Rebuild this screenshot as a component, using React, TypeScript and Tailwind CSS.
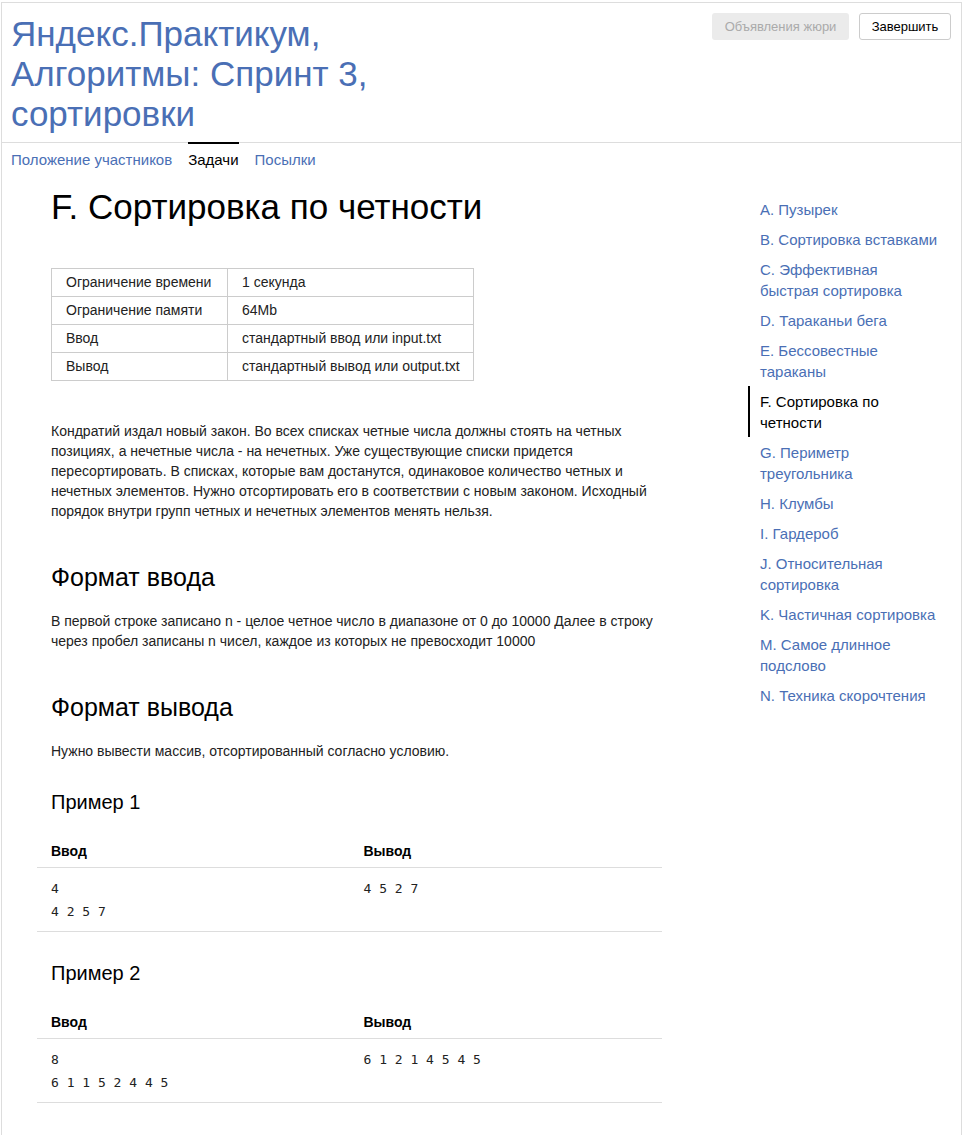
import React from "react";

const tasks = [
  "A. Пузырек",
  "B. Сортировка вставками",
  "C. Эффективная быстрая сортировка",
  "D. Тараканьи бега",
  "E. Бессовестные тараканы",
  "F. Сортировка по четности",
  "G. Периметр треугольника",
  "H. Клумбы",
  "I. Гардероб",
  "J. Относительная сортировка",
  "K. Частичная сортировка",
  "M. Самое длинное подслово",
  "N. Техника скорочтения",
];

const limits = [
  ["Ограничение времени", "1 секунда"],
  ["Ограничение памяти", "64Mb"],
  ["Ввод", "стандартный ввод или input.txt"],
  ["Вывод", "стандартный вывод или output.txt"],
];

function Sample({ title, input, output }: { title: string; input: string[]; output: string[] }) {
  return (
    <div>
      <h3 className="mt-[28px] pl-[14px] text-[20px] leading-[26px] text-black">{title}</h3>
      <div className="mt-[16px]">
        <div className="flex border-b border-[#ddd] pt-[10px] pb-[6px] text-[14px] leading-[20px] font-bold text-black">
          <div className="w-1/2 pl-[14px]">Ввод</div>
          <div className="w-1/2 pl-[14px]">Вывод</div>
        </div>
        <div className="flex border-b border-[#ddd] pt-[9px] pb-[8px] font-['DejaVu_Sans_Mono',monospace] text-[13px] leading-[23px] text-[#222]">
          <div className="w-1/2 pl-[14px] whitespace-pre">{input.join("\n")}</div>
          <div className="w-1/2 pl-[14px] whitespace-pre">{output.join("\n")}</div>
        </div>
      </div>
    </div>
  );
}

export default function App() {
  return (
    <div className="bg-white pt-[2px] pl-[1px] font-['Liberation_Sans',Arial,sans-serif] min-h-[1135px]">
      <div className="w-[961px] min-h-[1133px] border-x border-t border-[#ddd]">
        {/* header */}
        <div className="flex justify-between border-b border-[#ddd] pb-[8px]">
          <div className="pl-[9px] pt-[11px] w-[400px] text-[35px] leading-[40px] text-[#4a6fb5]">
            Яндекс.Практикум, Алгоритмы: Спринт 3, сортировки
          </div>
          <div className="flex gap-[10px] pt-[10px] pr-[10px]">
            <button className="h-[27px] w-[137px] rounded-[3px] bg-[#ebebeb] text-[13px] text-[#aaa]">
              Объявления жюри
            </button>
            <button className="h-[27px] w-[92px] rounded-[3px] border border-[#ccc] bg-white text-[13px] text-black">
              Завершить
            </button>
          </div>
        </div>

        {/* tabs */}
        <div className="-mt-px flex gap-[16px] pl-[9px] text-[15px] leading-[16px]">
          <div className="border-t-2 border-transparent pt-[8px] pb-[9px] text-[#4a6fb5]">Положение участников</div>
          <div className="border-t-2 border-black pt-[8px] pb-[9px] text-black">Задачи</div>
          <div className="border-t-2 border-transparent pt-[8px] pb-[9px] text-[#4a6fb5]">Посылки</div>
        </div>

        <div className="flex items-start pl-[35px]">
          {/* statement */}
          <div className="w-[625px] pb-[30px]">
            <h1 className="mt-[10px] pl-[14px] text-[35px] leading-[40px] text-black">F. Сортировка по четности</h1>

            <table className="mt-[41px] ml-[14px] border-collapse text-[14px] text-[#222]">
              <tbody>
                {limits.map(([k, v]) => (
                  <tr key={k} className="h-[28px]">
                    <td className="w-[176px] border border-[#ccc] pl-[14px]">{k}</td>
                    <td className="w-[246px] border border-[#ccc] pl-[14px]">{v}</td>
                  </tr>
                ))}
              </tbody>
            </table>

            <p className="mt-[40px] pl-[14px] text-[14px] leading-[20px] text-[#222]">
              Кондратий издал новый закон. Во всех списках четные числа должны стоять на четных позициях, а нечетные
              числа - на нечетных. Уже существующие списки придется пересортировать. В списках, которые вам достанутся,
              одинаковое количество четных и нечетных элементов. Нужно отсортировать его в соответствии с новым
              законом. Исходный порядок внутри групп четных и нечетных элементов менять нельзя.
            </p>

            <h2 className="mt-[41px] pl-[14px] text-[25px] leading-[30px] text-black">Формат ввода</h2>
            <p className="mt-[19px] pl-[14px] text-[14px] leading-[20px] text-[#222]">
              В первой строке записано n - целое четное число в диапазоне от 0 до 10000 Далее в строку через пробел
              записаны n чисел, каждое из которых не превосходит 10000
            </p>

            <h2 className="mt-[41px] pl-[14px] text-[25px] leading-[30px] text-black">Формат вывода</h2>
            <p className="mt-[19px] pl-[14px] text-[14px] leading-[20px] text-[#222]">
              Нужно вывести массив, отсортированный согласно условию.
            </p>

            <Sample title="Пример 1" input={["4", "4 2 5 7"]} output={["4 5 2 7"]} />
            <Sample title="Пример 2" input={["8", "6 1 1 5 2 4 4 5"]} output={["6 1 2 1 4 5 4 5"]} />
          </div>

          {/* task list */}
          <ul className="ml-[86px] mt-[17px] w-[192px] text-[15px] leading-[21px]">
            {tasks.map((t) => {
              const active = t.startsWith("F.");
              return (
                <li
                  key={t}
                  className={
                    active
                      ? "border-l-2 border-black py-[4.5px] pl-[10px] text-black"
                      : "border-l-2 border-transparent py-[4.5px] pl-[10px] text-[#4a6fb5]"
                  }
                >
                  {t}
                </li>
              );
            })}
          </ul>
        </div>
      </div>
    </div>
  );
}
